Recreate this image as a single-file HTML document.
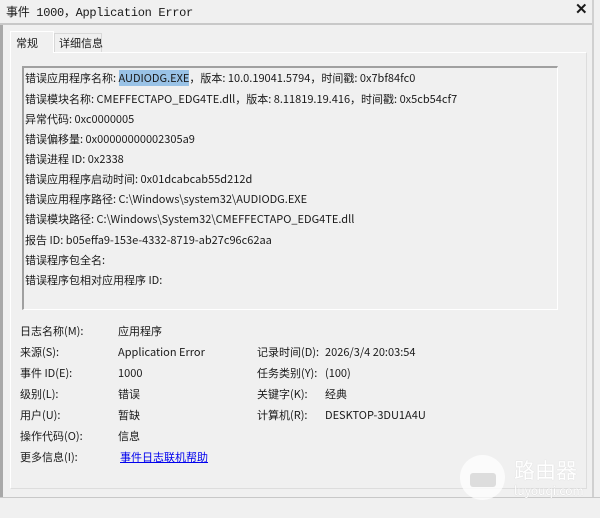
<!DOCTYPE html>
<html><head><meta charset="utf-8"><style>
*{margin:0;padding:0;box-sizing:border-box}
body{width:600px;height:518px;background:#f0f0f0;position:relative;overflow:hidden;font-family:"Noto Sans CJK SC","Liberation Sans",sans-serif;font-size:11px;line-height:14px;color:#1a1a1a}
.a{position:absolute;white-space:nowrap}
.title{left:6px;top:6px;font-family:"Liberation Mono","Noto Sans CJK SC",monospace;font-size:12px;letter-spacing:-0.3px}
.tl{position:absolute;left:0;top:23px;width:594px;height:2px;background:#c8c8c8}
.wl{position:absolute;left:0;top:25px;width:3px;height:473px;background:#a8a8a8}
.wr{position:absolute;left:592px;top:0;width:2px;height:498px;background:#d0d0d0}
.bl{position:absolute;left:0;top:497px;width:600px;height:1px;background:#c8c8c8}
.panel{position:absolute;left:10px;top:52px;width:577px;height:437px;border:1px solid #fff;border-right-color:#ddd;border-bottom-color:#ddd}
.tab1{position:absolute;left:10px;top:31px;width:44px;height:22px;background:#f0f0f0;border:1px solid #fff;border-bottom:none;padding:4px 0 0 5px;z-index:2;white-space:nowrap}
.tab2{position:absolute;left:54px;top:33px;width:48px;height:19px;background:#f0f0f0;border:1px solid #d8d8d8;border-bottom:none;padding:2px 0 0 4px;white-space:nowrap}
.box{position:absolute;left:22px;top:66px;width:536px;height:244px;border-left:2px solid #a0a0a0;border-top:2px solid #a0a0a0;border-right:1px solid #fff;border-bottom:1px solid #fff}
.ln{position:absolute;left:25px}
.hl{background:#99c2e6}
a{color:#0000ee;text-decoration:underline}
</style></head><body>
<div class="a title">事件 1000，Application Error</div>
<div class="a" style="left:575px;top:3px;font-size:15px;font-weight:bold;font-family:'Liberation Sans',sans-serif">✕</div>
<div class="tl"></div><div class="wl"></div><div class="wr"></div><div class="bl"></div>
<div class="panel"></div>
<div class="tab1">常规</div>
<div class="tab2">详细信息</div>
<div class="box"></div>
<div class="a ln" style="top:71px">错误应用程序名称: <span class="hl">AUDIODG.EXE</span>，版本: 10.0.19041.5794，时间戳: 0x7bf84fc0</div>
<div class="a ln" style="top:92px">错误模块名称: CMEFFECTAPO_EDG4TE.dll，版本: 8.11819.19.416，时间戳: 0x5cb54cf7</div>
<div class="a ln" style="top:112px">异常代码: 0xc0000005</div>
<div class="a ln" style="top:132px">错误偏移量: 0x00000000002305a9</div>
<div class="a ln" style="top:152px">错误进程 ID: 0x2338</div>
<div class="a ln" style="top:172px">错误应用程序启动时间: 0x01dcabcab55d212d</div>
<div class="a ln" style="top:192px">错误应用程序路径: C:\Windows\system32\AUDIODG.EXE</div>
<div class="a ln" style="top:212px">错误模块路径: C:\Windows\System32\CMEFFECTAPO_EDG4TE.dll</div>
<div class="a ln" style="top:233px">报告 ID: b05effa9-153e-4332-8719-ab27c96c62aa</div>
<div class="a ln" style="top:253px">错误程序包全名:</div>
<div class="a ln" style="top:273px">错误程序包相对应用程序 ID:</div>

<div class="a" style="left:20px;top:324px">日志名称(M):</div><div class="a" style="left:118px;top:324px">应用程序</div>
<div class="a" style="left:20px;top:345px">来源(S):</div><div class="a" style="left:118px;top:345px">Application Error</div>
<div class="a" style="left:257px;top:345px">记录时间(D):</div><div class="a" style="left:325px;top:345px">2026/3/4 20:03:54</div>
<div class="a" style="left:20px;top:366px">事件 ID(E):</div><div class="a" style="left:118px;top:366px">1000</div>
<div class="a" style="left:257px;top:366px">任务类别(Y):</div><div class="a" style="left:325px;top:366px">(100)</div>
<div class="a" style="left:20px;top:387px">级别(L):</div><div class="a" style="left:118px;top:387px">错误</div>
<div class="a" style="left:257px;top:387px">关键字(K):</div><div class="a" style="left:325px;top:387px">经典</div>
<div class="a" style="left:20px;top:408px">用户(U):</div><div class="a" style="left:118px;top:408px">暂缺</div>
<div class="a" style="left:257px;top:408px">计算机(R):</div><div class="a" style="left:325px;top:408px">DESKTOP-3DU1A4U</div>
<div class="a" style="left:20px;top:429px">操作代码(O):</div><div class="a" style="left:118px;top:429px">信息</div>
<div class="a" style="left:20px;top:450px">更多信息(I):</div><div class="a" style="left:120px;top:450px"><a>事件日志联机帮助</a></div>

<div class="a" style="left:460px;top:455px;width:45px;height:45px;border-radius:50%;background:rgba(255,255,255,0.75)"></div>
<div class="a" style="left:470px;top:473px;width:26px;height:14px;border-radius:3px;background:#ddd"></div>
<div class="a" style="left:514px;top:457px;font-size:21px;line-height:26px;color:#fff;text-shadow:0 0 1px #ccc">路由器</div>
<div class="a" style="left:514px;top:484px;font-size:12px;color:#fff;text-shadow:0 0 1px #bbb">luyouqi.com</div>
</body></html>
